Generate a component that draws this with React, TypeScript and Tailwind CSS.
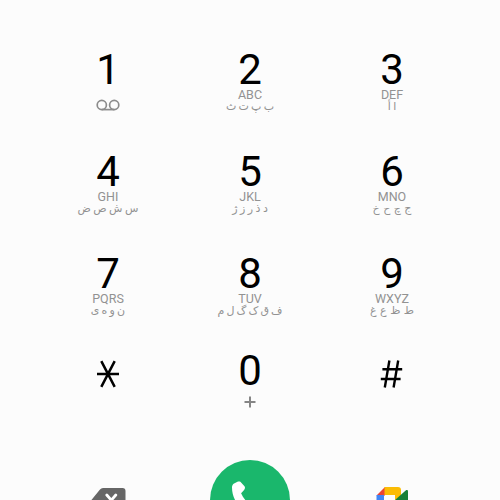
import React from "react";

type Key = { digit: string; latin?: string; extra?: string; spacing?: string };

const keys: Key[] = [
  { digit: "1" },
  { digit: "2", latin: "ABC", extra: "ب پ ت ث", spacing: "[word-spacing:-1.3px]" },
  { digit: "3", latin: "DEF", extra: "ا أ", spacing: "[word-spacing:-1px]" },
  { digit: "4", latin: "GHI", extra: "س ش ص ض", spacing: "[word-spacing:-1px]" },
  { digit: "5", latin: "JKL", extra: "د ذ ر ز ژ", spacing: "[word-spacing:-1px]" },
  { digit: "6", latin: "MNO", extra: "ج چ ح خ", spacing: "[word-spacing:0px]" },
  { digit: "7", latin: "PQRS", extra: "ن و ه ی", spacing: "[word-spacing:-1.3px]" },
  { digit: "8", latin: "TUV", extra: "ف ق ک گ ل م", spacing: "[word-spacing:-1.4px]" },
  { digit: "9", latin: "WXYZ", extra: "ط ظ ع غ", spacing: "[word-spacing:0px]" },
];

function Voicemail() {
  return (
    <svg className="mt-[9px] h-3 w-6" viewBox="0 0 24 12" fill="none" stroke="#8c8c8c" strokeWidth="1.7">
      <circle cx="5.8" cy="6" r="4.6" />
      <circle cx="18.2" cy="6" r="4.6" />
      <path d="M5.8 10.6h12.4" />
    </svg>
  );
}

function DialKey({ digit, latin, extra, spacing }: Key) {
  return (
    <button className="flex flex-col items-center">
      <span className="text-[42px] leading-[40px] text-black">{digit}</span>
      {latin ? (
        <>
          <span className="text-[12.5px] leading-[10px] text-[#929292]">{latin}</span>
          <span
            dir="rtl"
            className={`mt-px font-['DejaVu_Sans',sans-serif] text-[11px] leading-[11px] whitespace-nowrap text-[#929292] ${spacing}`}
          >
            {extra}
          </span>
        </>
      ) : (
        <Voicemail />
      )}
    </button>
  );
}

export default function App() {
  return (
    <main className="h-[500px] w-[500px] overflow-hidden bg-[#fcfcfc] px-[37px] pt-[50px] font-['Roboto',sans-serif]">
      <div className="grid auto-rows-[102px] grid-cols-3">
        {keys.map((key) => (
          <DialKey key={key.digit} {...key} />
        ))}
      </div>
      <div className="grid h-[104px] grid-cols-3">
        <button className="flex justify-center pt-1">
          <svg className="h-7 w-6" viewBox="0 0 24 28" stroke="#000" strokeWidth="2.5">
            <path d="M1 14h22M5.3 1.2l13.4 25.6M18.7 1.2L5.3 26.8" />
          </svg>
        </button>
        <button className="-mt-[5px] flex flex-col items-center">
          <span className="text-[42px] leading-[40px] text-black">0</span>
          <svg className="mt-[5px] h-3 w-3" viewBox="0 0 12 12" stroke="#858585" strokeWidth="2">
            <path d="M.5 6h11M6 .5v11" />
          </svg>
        </button>
        <button className="flex justify-center pt-1">
          <svg className="h-7 w-6" viewBox="0 0 24 28" stroke="#000" strokeWidth="2.4">
            <path d="M2.4 9.3h19.8M.8 19h19.8M9.4.5l-4.6 27M18.2.5l-4.6 27" />
          </svg>
        </button>
      </div>
      <div className="grid grid-cols-3">
        <button className="flex justify-center pt-[28px]">
          <svg className="h-[25px] w-[35px]" viewBox="0 0 35 25">
            <path d="M12 0h19.5a3 3 0 0 1 3 3v19a3 3 0 0 1-3 3H12a4 4 0 0 1-3-1.6L0 12.5 9 1.6A4 4 0 0 1 12 0z" fill="#666" />
            <path d="M15.8 7l9 10.4M24.8 7l-9 10.4" stroke="#fff" strokeWidth="2.8" strokeLinecap="round" />
          </svg>
        </button>
        <button className="flex h-20 w-20 items-center justify-center justify-self-center rounded-full bg-[#1ab76c]">
          <svg className="h-10 w-10" viewBox="0 0 40 40" fill="#fff">
            <path d="M3.6 3.8L8 1.6c1.5-.5 2.6 0 3.3 1.1l3.2 3.6c.8 1.1.6 2.5-.4 3.6l-3 3.4c2.5 6 7.5 11 14 14l2.5-3c.7-.9 2-1.2 3-.7l5 2.4c1.2.6 1.7 1.7 1.4 3l-1.5 5c-.3 1.3-1.4 2.1-2.7 2.1C15 36 2 23 2 7.5c0-1.5.5-2.8 1.6-3.7z" />
          </svg>
        </button>
        <button className="flex justify-center pt-[27px]">
          <svg className="h-[26px] w-8" viewBox="0 0 32 26">
            <path d="M9 0L.5 8.5H9z" fill="#ea4335" />
            <path d="M.5 8H8v10H.5z" fill="#4285f4" />
            <path d="M.5 18H8v8H2.5a2 2 0 0 1-2-2z" fill="#1967d2" />
            <path d="M8.5 0H22a3 3 0 0 1 3 3v6l-6 4V8H8.5z" fill="#fbbc04" />
            <path d="M8 18h11v-5l6 5v5a3 3 0 0 1-3 3H8z" fill="#34a853" />
            <path d="M19 13L30 3.2c.8-.6 2-.1 2 1v17.6c0 1.1-1.2 1.6-2 1z" fill="#188038" />
          </svg>
        </button>
      </div>
    </main>
  );
}
